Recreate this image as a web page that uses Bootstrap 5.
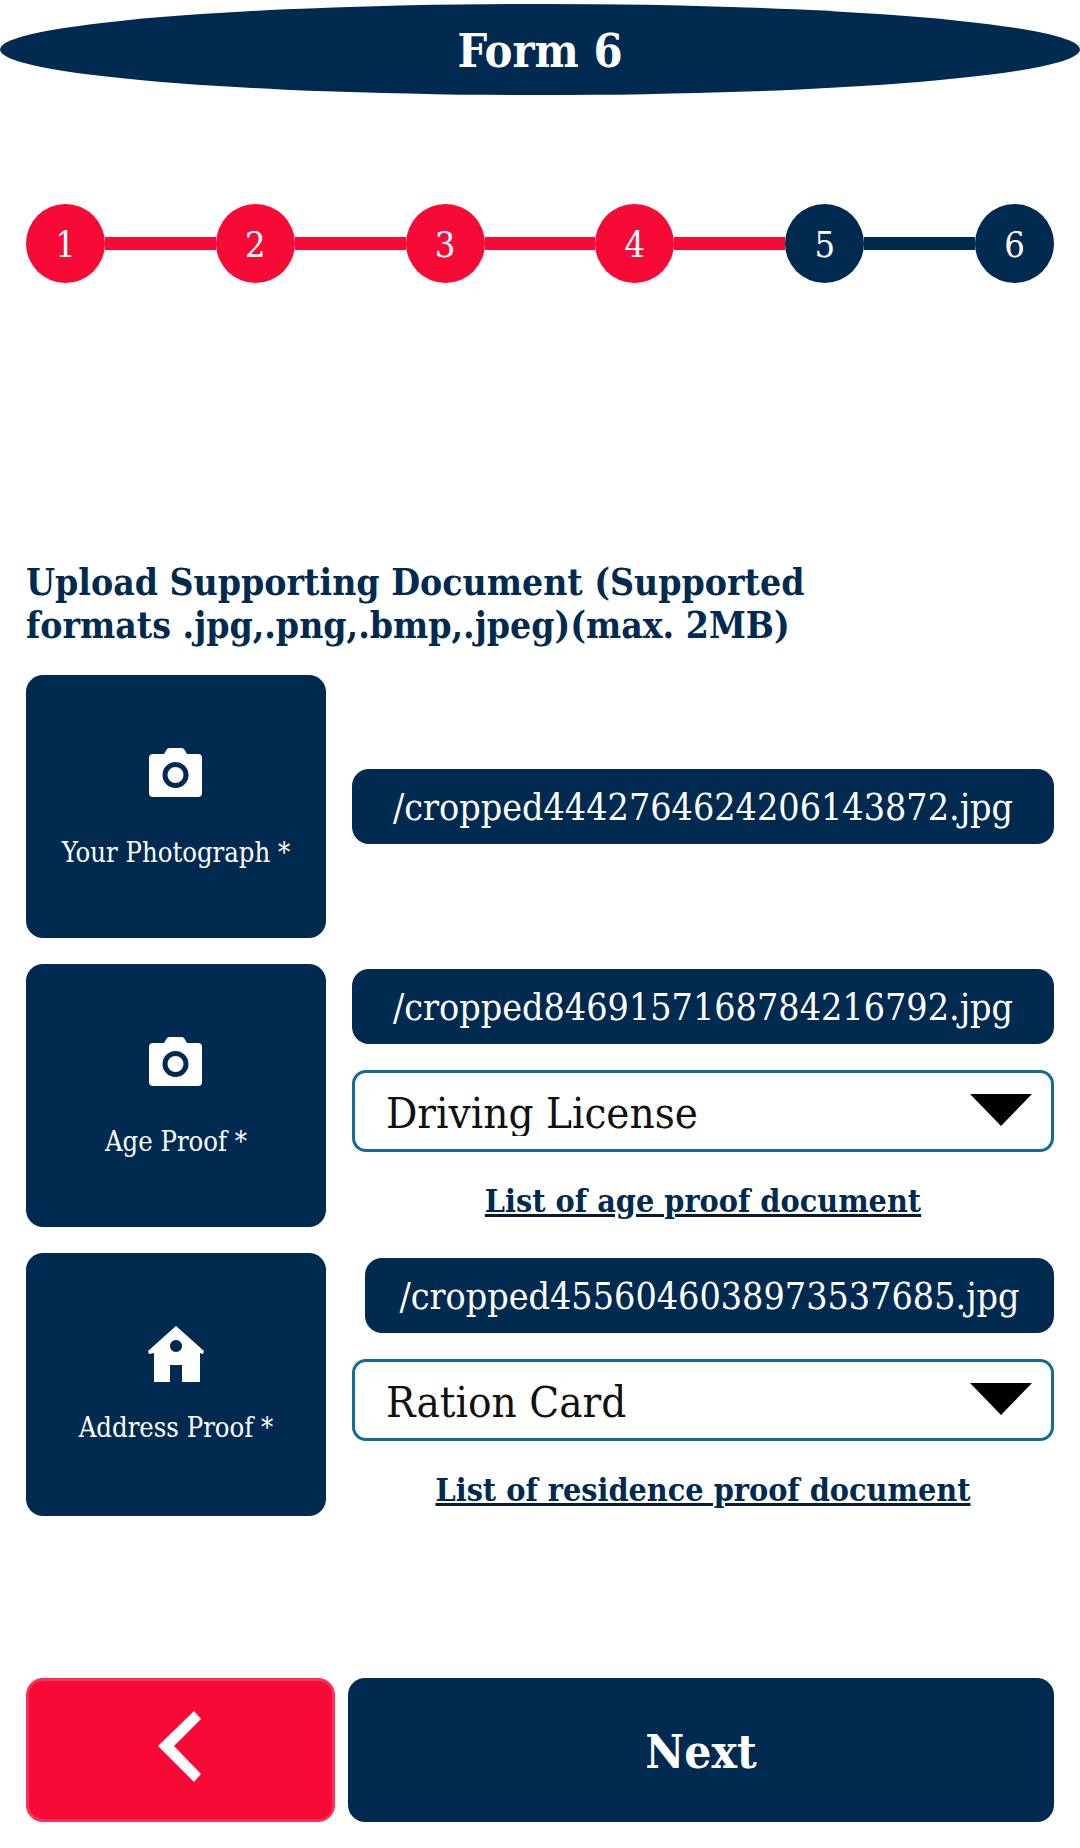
<!DOCTYPE html>
<html lang="en">
<head>
<meta charset="utf-8">
<title>Form 6</title>
<link href="https://cdn.jsdelivr.net/npm/bootstrap@5.3.0/dist/css/bootstrap.min.css" rel="stylesheet">
<style>
:root{--navy:#012a50;--red:#f70a36;}
body{font-family:"DejaVu Serif Condensed","DejaVu Serif","Liberation Serif",serif;background:#fff;overflow:hidden;}
.page-wrap{width:1080px;height:1848px;padding:4px 0 0;}
.oval-head{height:91px;background:var(--navy);border-radius:50%;color:#fff;font-weight:700;font-size:46.5px;line-height:1;padding-top:3px;}
.body-wrap{padding:109px 26px 0 26px;}
.step-dot{width:79px;height:79px;border-radius:50%;color:#fff;font-size:36px;flex:none;padding-top:2px;}
.step-line{height:13px;flex:1 1 auto;}
.fill-red{background:var(--red);}
.fill-navy{background:var(--navy);}
.doc-title{margin:278px 0 0;height:114px;font-size:37px;line-height:42.5px;font-weight:700;color:var(--navy);width:830px;}
.upload-row{gap:26px;margin-top:0;height:263px;margin-bottom:26px;}
.tile{width:300px;height:263px;flex:none;border-radius:17px;background:var(--navy);color:#fff;padding-top:73px;font-size:27.2px;line-height:1;}
.tile-svg{display:block;margin:0 1px 42px 0;}
.tile-svg-home{display:block;margin-bottom:32px;}
.right-col{min-width:0;}
.path-pill{height:75px;border-radius:17px;background:var(--navy);color:#fff;font-size:37.3px;line-height:1;padding-top:3px;}
.top-gap{margin-top:5px;}
.inset-pill{margin-left:13px;}
.doc-select.form-select{height:82px;margin-top:26px;border:3px solid #146c94;border-radius:14px;font-size:43.5px;line-height:1;padding:6px 0 0 31px;color:#111;font-family:inherit;
background-image:url("data:image/svg+xml,%3Csvg xmlns='http://www.w3.org/2000/svg' viewBox='0 0 62 32'%3E%3Cpath d='M0 0h62L31 32z' fill='%23000'/%3E%3C/svg%3E");background-size:62px 32px;background-position:right 19px top 21px;box-shadow:none;}
.doc-link{display:block;text-align:center;margin-top:29px;font-size:32px;line-height:1.3;font-weight:700;color:var(--navy);text-decoration:underline;text-decoration-color:#0b1a2c;}
.foot-row{gap:13px;margin-top:162px;}
.foot-btn.btn{height:144px;border-radius:17px;color:#fff;padding:0;}
.back-btn.btn{width:309px;background:var(--red);border:3px solid #ff2f58;padding:0 3px 7px 0;}
.next-btn.btn{flex:1 1 auto;background:var(--navy);border:0;font-size:47.5px;font-weight:700;padding-top:3px;}
</style>
</head>
<body>
<div class="page-wrap">
  <div class="oval-head d-flex align-items-center justify-content-center">Form 6</div>
  <div class="body-wrap">
    <div class="d-flex align-items-center">
      <div class="step-dot fill-red d-flex align-items-center justify-content-center">1</div><div class="step-line fill-red"></div>
      <div class="step-dot fill-red d-flex align-items-center justify-content-center">2</div><div class="step-line fill-red"></div>
      <div class="step-dot fill-red d-flex align-items-center justify-content-center">3</div><div class="step-line fill-red"></div>
      <div class="step-dot fill-red d-flex align-items-center justify-content-center">4</div><div class="step-line fill-red"></div>
      <div class="step-dot fill-navy d-flex align-items-center justify-content-center">5</div><div class="step-line fill-navy"></div>
      <div class="step-dot fill-navy d-flex align-items-center justify-content-center">6</div>
    </div>
    <h2 class="doc-title">Upload Supporting Document (Supported formats .jpg,.png,.bmp,.jpeg)(max. 2MB)</h2>

    <div class="upload-row d-flex">
      <div class="tile d-flex flex-column align-items-center">
        <svg class="tile-svg" width="53" height="49" viewBox="0 0 53 49"><path fill="#fff" d="M4 6h11l3-5q1-1 3-1h11q2 0 3 1l3 5h11q4 0 4 4v35q0 4-4 4H4q-4 0-4-4V10q0-4 4-4z"/><circle cx="26.5" cy="27" r="10.5" fill="none" stroke="#012a50" stroke-width="5"/></svg>
        <span>Your Photograph *</span>
      </div>
      <div class="right-col flex-grow-1 d-flex flex-column justify-content-center">
        <div class="path-pill d-flex align-items-center justify-content-center">/cropped4442764624206143872.jpg</div>
      </div>
    </div>

    <div class="upload-row d-flex">
      <div class="tile d-flex flex-column align-items-center">
        <svg class="tile-svg" width="53" height="49" viewBox="0 0 53 49"><path fill="#fff" d="M4 6h11l3-5q1-1 3-1h11q2 0 3 1l3 5h11q4 0 4 4v35q0 4-4 4H4q-4 0-4-4V10q0-4 4-4z"/><circle cx="26.5" cy="27" r="10.5" fill="none" stroke="#012a50" stroke-width="5"/></svg>
        <span>Age Proof *</span>
      </div>
      <div class="right-col flex-grow-1 d-flex flex-column">
        <div class="path-pill top-gap d-flex align-items-center justify-content-center">/cropped8469157168784216792.jpg</div>
        <select class="doc-select form-select"><option>Driving License</option></select>
        <a class="doc-link" href="#">List of age proof document</a>
      </div>
    </div>

    <div class="upload-row d-flex">
      <div class="tile d-flex flex-column align-items-center">
        <svg class="tile-svg-home" width="56" height="56" viewBox="0 0 56 56"><path fill="#fff" fill-rule="evenodd" d="M28 0 56 25l-1 3-3-1v29H34V39H22v17H6V27l-5 1-1-3zM28 14a6 6 0 1 0 .01 0z"/></svg>
        <span>Address Proof *</span>
      </div>
      <div class="right-col flex-grow-1 d-flex flex-column">
        <div class="path-pill top-gap inset-pill d-flex align-items-center justify-content-center">/cropped4556046038973537685.jpg</div>
        <select class="doc-select form-select"><option>Ration Card</option></select>
        <a class="doc-link" href="#">List of residence proof document</a>
      </div>
    </div>

    <div class="foot-row d-flex">
      <button type="button" class="foot-btn back-btn btn d-flex align-items-center justify-content-center" aria-label="Back">
        <svg width="43" height="71" viewBox="0 0 43 71"><path fill="#fff" d="M36 0l7 8-27 27 27 28-7 8L0 35z"/></svg>
      </button>
      <button type="button" class="foot-btn next-btn btn">Next</button>
    </div>
  </div>
</div>
<script src="https://cdn.jsdelivr.net/npm/bootstrap@5.3.0/dist/js/bootstrap.bundle.min.js"></script>
</body>
</html>
